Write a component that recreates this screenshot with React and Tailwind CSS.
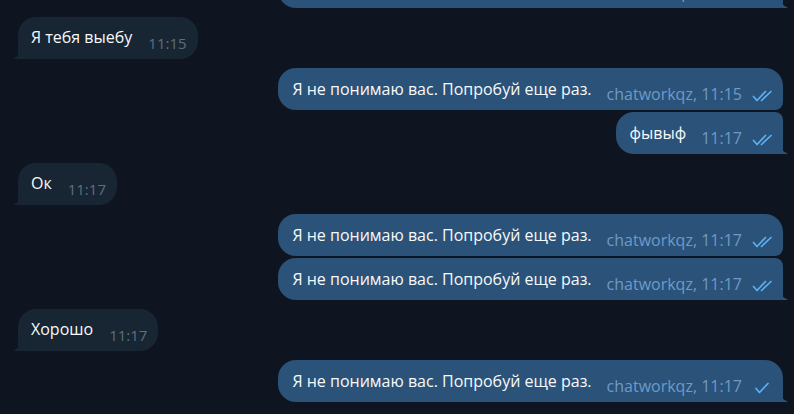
import React from "react";

const font = { fontFamily: '"Open Sans", "Noto Sans", sans-serif' };

function Checks({ double }) {
  return (
    <svg width="22" height="12" viewBox="0 0 22 12" fill="none" stroke="#5cb0f2" strokeWidth="1.7" strokeLinecap="round" strokeLinejoin="round" className="mb-[8px] ml-[10px]">
      {double ? (
        <>
          <path d="M1.5 6.5 L5 10.5 L13.5 1.5" />
          <path d="M9.5 10.5 L19 1.5" />
        </>
      ) : (
        <path d="M4 6.5 L7.5 10.5 L16 1.5" />
      )}
    </svg>
  );
}

function TailRight() {
  return (
    <svg className="absolute right-[-6px] bottom-0" width="10" height="14" viewBox="0 0 10 14">
      <path d="M0 0 C0 7 3 11 8 13.2 L9 14 L0 14 Z" fill="#2b5278" />
    </svg>
  );
}

function TailLeft() {
  return (
    <svg className="absolute left-[-6px] bottom-0" width="10" height="14" viewBox="0 0 10 14">
      <path d="M10 0 C10 7 7 11 2 13.2 L1 14 L10 14 Z" fill="#182533" />
    </svg>
  );
}

function Out({ text, meta, double = true, tail, roundTop = true, className = "" }) {
  return (
    <div className={"flex justify-end pr-[11px] " + className}>
      <div
        className={
          "relative flex items-end h-[42px] bg-[#2b5278] pl-[14px] pr-[9px] rounded-l-[18px] " +
          (roundTop ? "rounded-tr-[18px] " : "rounded-tr-[8px] ") +
          (tail ? "rounded-br-none" : "rounded-br-[8px]")
        }
      >
        <span className="text-[16px] leading-[20px] text-[#f7f9fb] mb-[11px] whitespace-nowrap">{text}</span>
        <span className="ml-[15px] text-[16px] leading-[20px] text-[#6d9bc8] mb-[6px] whitespace-nowrap">{meta}</span>
        <Checks double={double} />
        {tail && <TailRight />}
      </div>
    </div>
  );
}

function In({ text, time, className = "" }) {
  return (
    <div className={"flex justify-start pl-[18px] " + className}>
      <div className="relative flex items-end h-[42px] bg-[#182533] pl-[13px] pr-[11px] rounded-[18px] rounded-bl-none">
        <span className="text-[16px] leading-[20px] text-[#f7f9fb] mb-[12px] whitespace-nowrap">{text}</span>
        <span className="ml-[16px] text-[15px] leading-[20px] text-[#5e6f80] mb-[6px] whitespace-nowrap">{time}</span>
        <TailLeft />
      </div>
    </div>
  );
}

export default function App() {
  const msg = "Я не понимаю вас. Попробуй еще раз.";
  return (
    <div className="w-[794px] h-[414px] overflow-hidden bg-[#0e1520]" style={font}>
      <div className="flex flex-col mt-[-34px]">
        <Out text={msg} meta="chatworkqz, 11:15" tail roundTop={false} />
        <In text="Я тебя выебу" time="11:15" className="mt-[9px]" />
        <Out text={msg} meta="chatworkqz, 11:15" className="mt-[9px]" />
        <Out text="фывыф" meta="11:17" tail roundTop={false} className="mt-[2px]" />
        <In text="Ок" time="11:17" className="mt-[9px]" />
        <Out text={msg} meta="chatworkqz, 11:17" className="mt-[9px]" />
        <Out text={msg} meta="chatworkqz, 11:17" tail roundTop={false} className="mt-[2px]" />
        <In text="Хорошо" time="11:17" className="mt-[9px]" />
        <Out text={msg} meta="chatworkqz, 11:17" double={false} tail className="mt-[9px]" />
      </div>
    </div>
  );
}
